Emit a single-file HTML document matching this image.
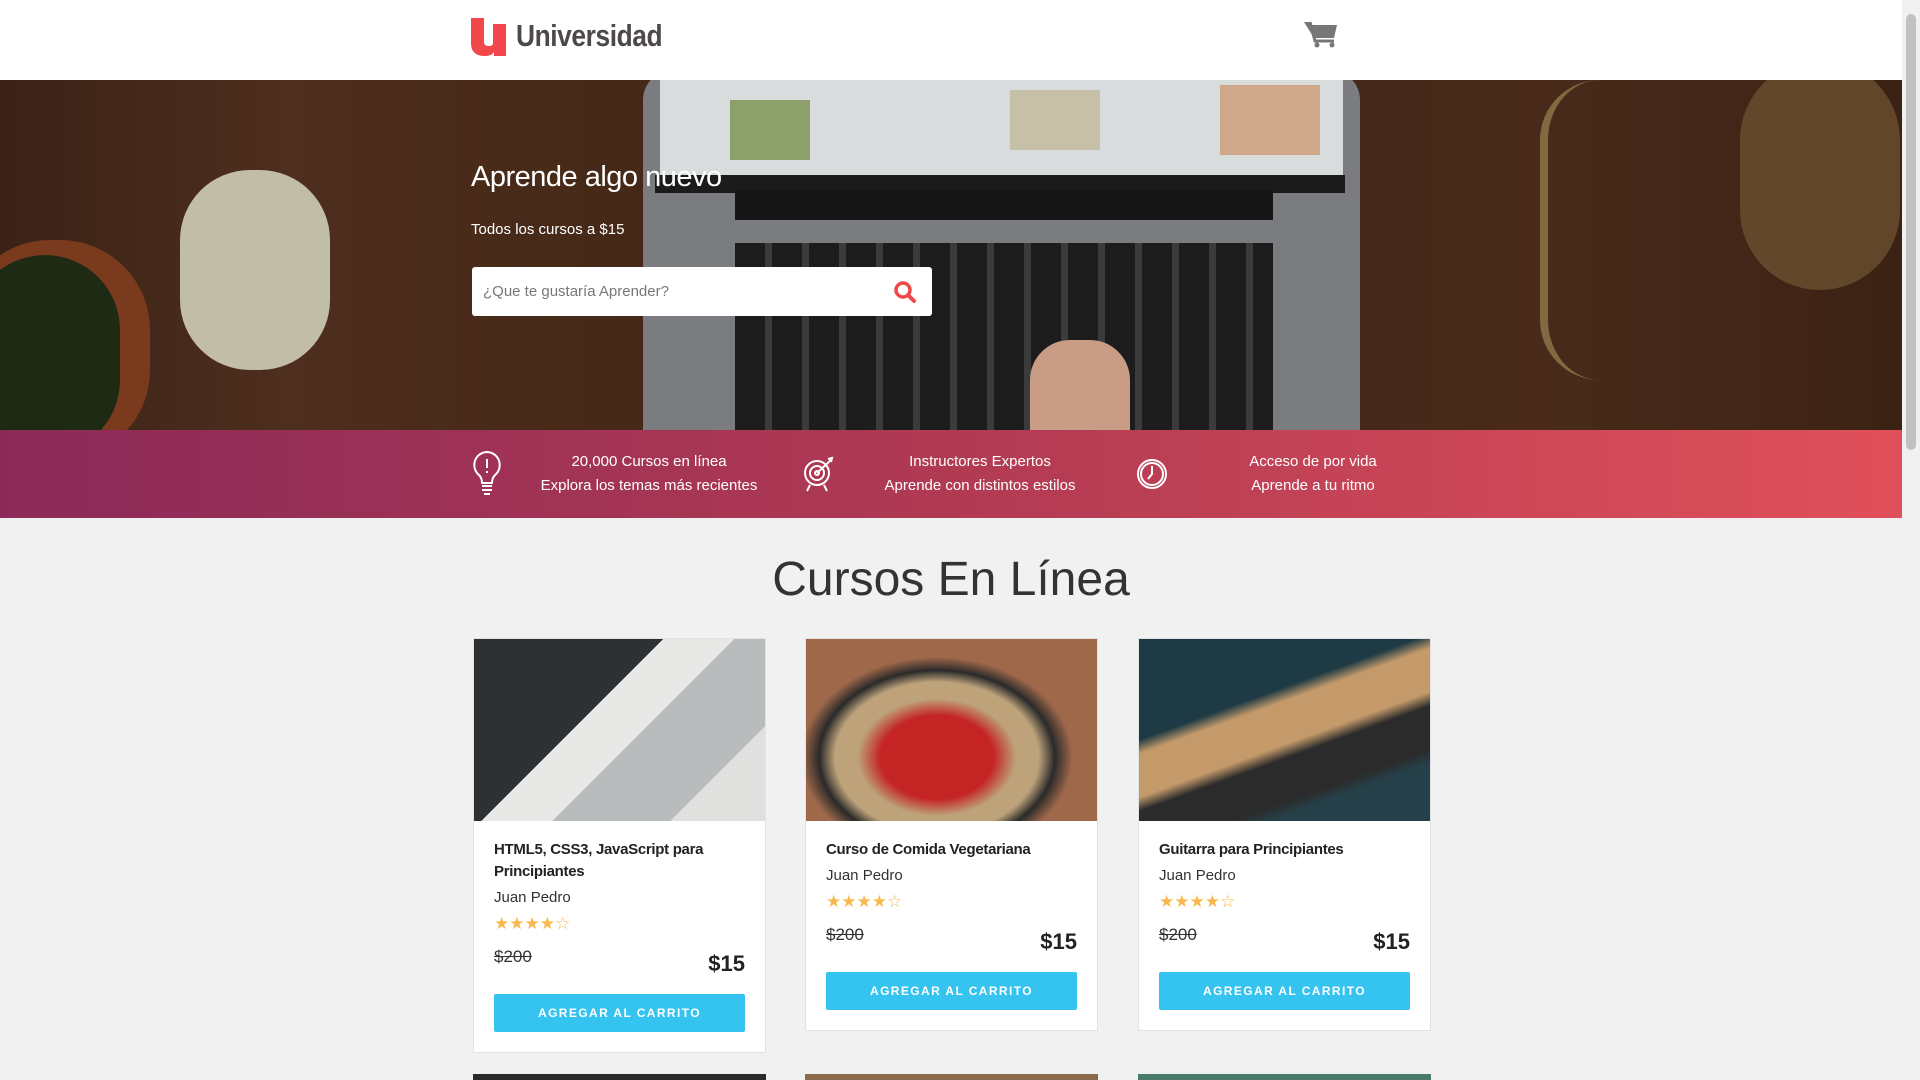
<!DOCTYPE html>
<html><head><meta charset="utf-8"><style>
*{box-sizing:border-box;margin:0;padding:0}
body{width:1920px;height:1080px;overflow:hidden;background:#f2f1f2;font-family:"Liberation Sans",sans-serif;position:relative}
.page{position:absolute;left:0;top:0;width:1902px;height:1080px;overflow:hidden}
.sb{position:absolute;right:0;top:0;width:18px;height:1080px;background:#f1f1f1}
.sb i{position:absolute;left:4px;top:14px;width:10px;height:436px;background:#c1c1c1;border-radius:5px}
header{height:80px;background:#fff;position:relative}
.logo{position:absolute;left:471px;top:18px}
.logo .t{position:absolute;left:45px;top:0;font:bold 31px/36px "Liberation Sans";color:#4d4948;transform:scaleX(.85);transform-origin:left;letter-spacing:-.5px;white-space:nowrap}
.hero{position:absolute;top:80px;left:0;width:1902px;height:350px;background:linear-gradient(90deg,#3a2216 0%,#4e2e1e 15%,#452817 35%,#3d2416 60%,#4a2b1b 80%,#3c2214 100%);overflow:hidden}
.band{position:absolute;top:430px;left:0;width:1902px;height:88px;background:linear-gradient(90deg,#8b2a58,#b13a53 50%,#e0505a);color:#fff;font-size:15px;text-align:center;line-height:24px}
h2{position:absolute;top:552px;left:0;width:1902px;text-align:center;font-weight:normal;font-size:48px;color:#333}
.card{position:absolute;top:638px;width:293px;background:#fff;border:1px solid #e2e2e2}
.card .img{height:182px}
.card .b{padding:18px 20px 20px}
.card h3{font-size:15px;line-height:22px;color:#222;letter-spacing:-.3px}
.card .a{font-size:15px;color:#333;margin-top:6px}
.stars{color:#f8b84e;font-size:17px;letter-spacing:0;margin-top:8px;line-height:20px}
.pr{display:flex;justify-content:space-between;margin-top:13px;align-items:flex-start}
.pr s{font-size:17px;color:#333}
.pr b{font-size:22px;color:#222;margin-top:4px}
.btn{margin-top:17px;height:38px;background:#35c3ef;border-radius:2px;color:#fff;font-size:12px;font-weight:bold;letter-spacing:1.4px;text-align:center;line-height:38px}
</style></head><body><div class="page">
<header>
<div class="logo"><svg width="40" height="38" viewBox="0 0 40 38"><path d="M0 0h13v24c0 3 2 4 5 4s4-1 4-4V6h13v32H23v-4c-2 3-5 4-9 4-9 0-14-4-14-13z" fill="#f2474b"/></svg><span class="t">Universidad</span></div>
<svg style="position:absolute;left:1304px;top:20px" width="34" height="28" viewBox="0 0 34 28"><path d="M0 2h6l1 3h26l-3 13H10z" fill="#777"/><path d="M6 2l5 19h19" stroke="#777" stroke-width="3" fill="none"/><circle cx="13" cy="25" r="2.5" fill="#777"/><circle cx="28" cy="25" r="2.5" fill="#777"/></svg>
</header>
<div class="hero">
 <div style="position:absolute;left:643px;top:-10px;width:717px;height:380px;background:#7a7c7f;border-radius:30px 30px 0 0"></div>
 <div style="position:absolute;left:660px;top:0;width:683px;height:95px;background:#d9dcdc"></div>
 <div style="position:absolute;left:730px;top:20px;width:80px;height:60px;background:#8ea06a"></div>
 <div style="position:absolute;left:1010px;top:10px;width:90px;height:60px;background:#c7c0a8"></div>
 <div style="position:absolute;left:1220px;top:5px;width:100px;height:70px;background:#cfa88c"></div>
 <div style="position:absolute;left:655px;top:95px;width:690px;height:18px;background:#1b1b1b"></div>
 <div style="position:absolute;left:735px;top:110px;width:538px;height:30px;background:#161616"></div>
 <div style="position:absolute;left:735px;top:163px;width:538px;height:200px;background:repeating-linear-gradient(90deg,#1c1c1c 0 30px,#3b3b3b 30px 37px),#222"></div>
 <div style="position:absolute;left:1030px;top:260px;width:100px;height:90px;background:#c99c85;border-radius:40px 40px 0 0"></div>
 <div style="position:absolute;left:180px;top:90px;width:150px;height:200px;background:#cfcdb6;border-radius:70px;opacity:.9"></div>
 <div style="position:absolute;left:-40px;top:160px;width:190px;height:220px;background:#7a3a1e;border-radius:90px"></div>
 <div style="position:absolute;left:-30px;top:175px;width:150px;height:200px;background:#1f2a14;border-radius:80px"></div>
 <div style="position:absolute;left:1540px;top:0;width:60px;height:300px;border-left:8px solid #8f7a4a;border-radius:60px 0 0 60px;opacity:.8"></div>
 <div style="position:absolute;left:1740px;top:-20px;width:160px;height:230px;background:#6a5030;border-radius:80px;opacity:.8"></div>
 <div style="position:absolute;left:471px;top:81px;color:#fff;font-size:29px;letter-spacing:-.5px">Aprende algo nuevo</div>
 <div style="position:absolute;left:471px;top:141px;color:#fff;font-size:15px">Todos los cursos a $15</div>
 <div style="position:absolute;left:472px;top:187px;width:460px;height:49px;background:#fff;border-radius:3px">
  <span style="position:absolute;left:11px;top:16px;font-size:15px;color:#777">¿Que te gustaría Aprender?</span>
  <svg style="position:absolute;left:421px;top:13px" width="24" height="24" viewBox="0 0 24 24"><circle cx="10" cy="10" r="7" stroke="#f2474b" stroke-width="3.5" fill="none"/><path d="M15 15l6 6" stroke="#f2474b" stroke-width="4" stroke-linecap="round"/></svg>
 </div>
</div>
<div class="band">
 <svg style="position:absolute;left:471px;top:20px" width="32" height="48" viewBox="0 0 32 48" fill="none" stroke="#fff" stroke-width="2"><path d="M16 2a13 13 0 0 0-8 23c2 2 3 5 3 8h10c0-3 1-6 3-8a13 13 0 0 0-8-23z"/><path d="M16 9v9M16 21v2M11 36h10M11 40h10M13 44h6"/></svg>
 <div style="position:absolute;left:520px;top:20px;width:258px">20,000 Cursos en línea<br>Explora los temas más recientes</div>
 <svg style="position:absolute;left:802px;top:26px" width="34" height="36" viewBox="0 0 34 36" fill="none" stroke="#fff" stroke-width="2"><circle cx="15" cy="17" r="12"/><circle cx="15" cy="17" r="7"/><circle cx="15" cy="17" r="2"/><path d="M15 17L29 4M26 3l4-1-1 4M8 29l-3 6M22 29l3 6"/></svg>
 <div style="position:absolute;left:851px;top:20px;width:258px">Instructores Expertos<br>Aprende con distintos estilos</div>
 <svg style="position:absolute;left:1136px;top:28px" width="32" height="32" viewBox="0 0 32 32" fill="none" stroke="#fff" stroke-width="2"><circle cx="16" cy="16" r="14"/><circle cx="16" cy="16" r="11"/><path d="M16 8v8l-4 5"/></svg>
 <div style="position:absolute;left:1184px;top:20px;width:258px">Acceso de por vida<br>Aprende a tu ritmo</div>
</div>
<h2>Cursos En Línea</h2>
<div class="card" style="left:473px"><div class="img" style="background:linear-gradient(135deg,#2d3133 0 40%,#e8e8e6 40% 55%,#b9bcbd 55% 80%,#e0e0de 80%)"></div><div class="b"><h3>HTML5, CSS3, JavaScript para Principiantes</h3><div class="a">Juan Pedro</div><div class="stars">★★★★☆</div><div class="pr"><s>$200</s><b>$15</b></div><div class="btn">AGREGAR AL CARRITO</div></div></div>
<div class="card" style="left:805px"><div class="img" style="background:radial-gradient(ellipse at 45% 65%,#c42424 0 25%,#bda27a 35% 45%,#2a2a2a 52%,#a0684a 60%)"></div><div class="b"><h3>Curso de Comida Vegetariana</h3><div class="a">Juan Pedro</div><div class="stars">★★★★☆</div><div class="pr"><s>$200</s><b>$15</b></div><div class="btn">AGREGAR AL CARRITO</div></div></div>
<div class="card" style="left:1138px"><div class="img" style="background:linear-gradient(160deg,#1e3a44 0 35%,#c49a6a 40% 55%,#2b2b2b 60% 75%,#264049 80%)"></div><div class="b"><h3>Guitarra para Principiantes</h3><div class="a">Juan Pedro</div><div class="stars">★★★★☆</div><div class="pr"><s>$200</s><b>$15</b></div><div class="btn">AGREGAR AL CARRITO</div></div></div>
<div style="position:absolute;left:473px;top:1074px;width:293px;height:10px;background:#2a2a2a"></div>
<div style="position:absolute;left:805px;top:1074px;width:293px;height:10px;background:#8a6a4a"></div>
<div style="position:absolute;left:1138px;top:1074px;width:293px;height:10px;background:#4a7a6a"></div>
</div><div class="sb"><i></i></div></body></html>
